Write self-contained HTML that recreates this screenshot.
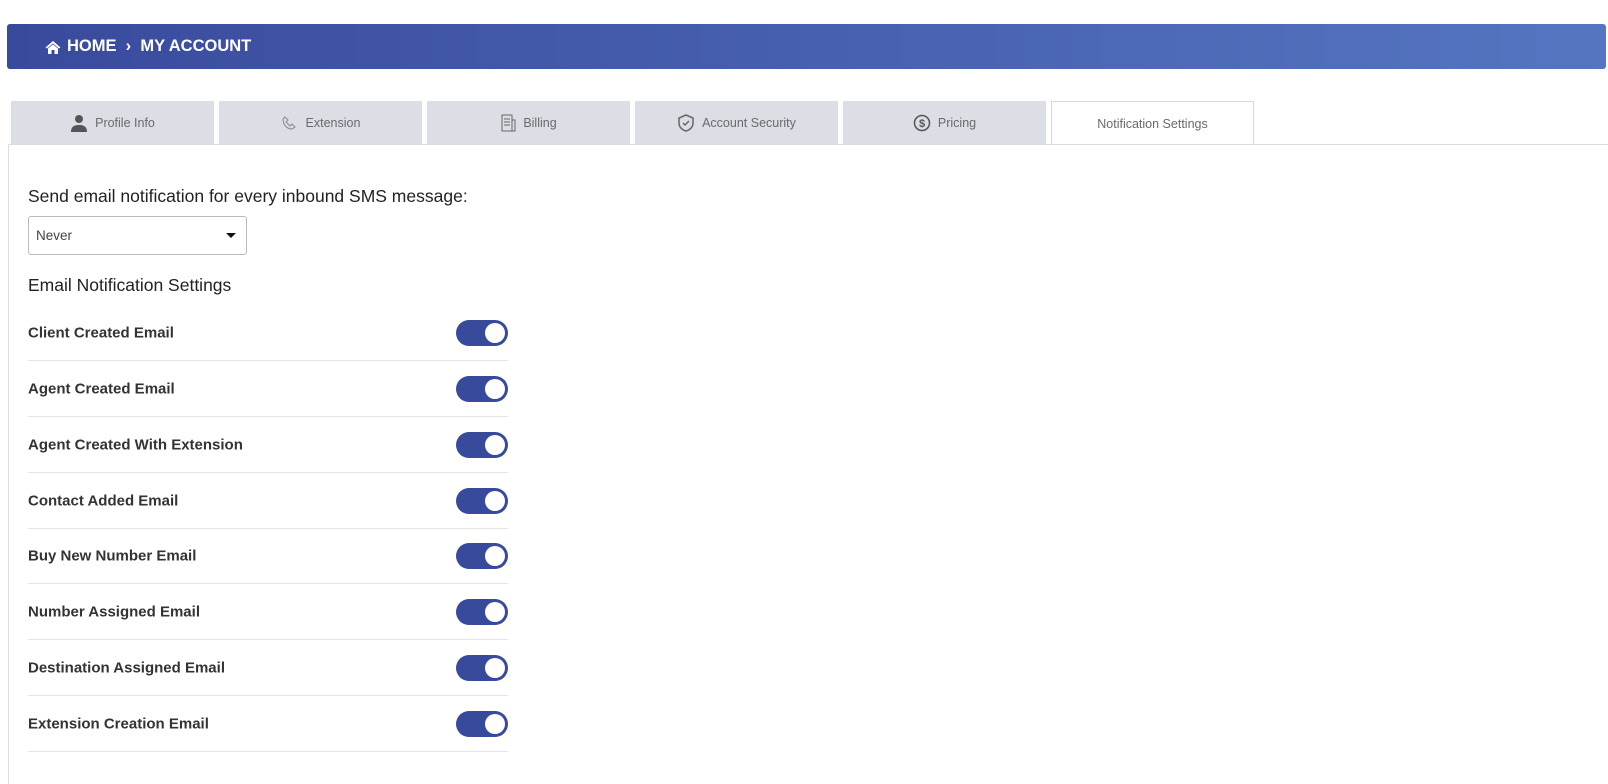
<!DOCTYPE html>
<html><head><meta charset="utf-8"><style>
*{box-sizing:border-box;margin:0;padding:0}
body{width:1608px;height:776px;background:#fff;font-family:"Liberation Sans",sans-serif;position:relative;overflow:hidden;color:#333}
.hdr{position:absolute;left:7px;top:24px;width:1599px;height:45px;border-radius:3px;background:linear-gradient(90deg,#394a9d,#5575c1);color:#fff;font-weight:bold;font-size:16.5px;line-height:45px;padding-left:38px;display:flex;align-items:center;gap:6px}
.tab{position:absolute;top:101px;width:203px;height:43px;background:#dcdee6;color:#6a6a6a;font-size:12.5px;display:flex;align-items:center;justify-content:center;gap:7px}
.tab.act{background:#fff;border:1px solid #d8d8d8;border-bottom:none;height:44px}
.panel{position:absolute;left:8px;top:144px;width:1600px;height:640px;border-left:1px solid #ddd;border-top:1px solid #ddd}
.t1{position:absolute;left:28px;top:186px;font-size:17.5px;color:#222}
.sel{position:absolute;left:28px;top:216px;width:219px;height:39px;border:1px solid #bbb;border-radius:3px;font-size:13.5px;line-height:37px;padding-left:7px;color:#444}
.sel:after{content:"";position:absolute;right:10px;top:16px;border:5px solid transparent;border-top:5px solid #111}
.t2{position:absolute;left:28px;top:275px;font-size:17.5px;color:#222}
.row{position:absolute;left:28px;width:480px;height:56px;border-bottom:1px solid #e5e5e5;font-size:15px;font-weight:bold;color:#333}
.row span{position:absolute;left:0;top:50%;transform:translateY(-50%)}
.tg{position:absolute;right:0;top:50%;transform:translateY(-50%);width:52px;height:26px;border-radius:13px;background:#384a9c}
.tg:after{content:"";position:absolute;right:3px;top:3px;width:20px;height:20px;border-radius:50%;background:#fff}
</style></head><body>
<div class="hdr"><svg width="16" height="14" viewBox="0 0 16 14"><path d="M8 1L0.5 7.5 2 8.5 8 3.5 14 8.5 15.5 7.5z M3 8.5V14h3.5v-4h3v4H13V8.5L8 4.5z" fill="#fff"/></svg>HOME &nbsp;›&nbsp; MY ACCOUNT</div>
<div class="tab" style="left:11px"><svg width="18" height="18" viewBox="0 0 18 18"><circle cx="9" cy="5" r="4" fill="#555"/><path d="M1 18c0-6 4-7 8-7s8 1 8 7z" fill="#555"/></svg>Profile Info</div>
<div class="tab" style="left:219px"><svg width="18" height="18" viewBox="0 0 18 18" fill="none" stroke="#888"><path d="M4 3l3 3-2 2 4 4 2-2 3 3-3 2C6 15 2 11 2 5z"/></svg>Extension</div>
<div class="tab" style="left:427px"><svg width="16" height="18" viewBox="0 0 16 18" fill="none" stroke="#666"><rect x="2" y="1" width="10" height="16"/><path d="M4 5h6M4 8h6M4 11h6M12 6h3v11h-3"/></svg>Billing</div>
<div class="tab" style="left:635px"><svg width="18" height="18" viewBox="0 0 18 18" fill="none" stroke="#666" stroke-width="1.5"><path d="M9 1l7 3v5c0 4-3 7-7 8-4-1-7-4-7-8V4z"/><path d="M6 9l2 2 4-4"/></svg>Account Security</div>
<div class="tab" style="left:843px"><svg width="18" height="18" viewBox="0 0 18 18"><circle cx="9" cy="9" r="7.5" fill="none" stroke="#555" stroke-width="1.5"/><text x="9" y="13" font-size="11" font-weight="bold" text-anchor="middle" fill="#555" font-family="Liberation Sans">$</text></svg>Pricing</div>
<div class="tab act" style="left:1051px">Notification Settings</div>
<div class="panel"></div>
<div class="t1">Send email notification for every inbound SMS message:</div>
<div class="sel">Never</div>
<div class="t2">Email Notification Settings</div>
<div class="row" style="top:305px"><span>Client Created Email</span><div class="tg"></div></div>
<div class="row" style="top:361px"><span>Agent Created Email</span><div class="tg"></div></div>
<div class="row" style="top:417px"><span>Agent Created With Extension</span><div class="tg"></div></div>
<div class="row" style="top:473px"><span>Contact Added Email</span><div class="tg"></div></div>
<div class="row" style="top:528px"><span>Buy New Number Email</span><div class="tg"></div></div>
<div class="row" style="top:584px"><span>Number Assigned Email</span><div class="tg"></div></div>
<div class="row" style="top:640px"><span>Destination Assigned Email</span><div class="tg"></div></div>
<div class="row" style="top:696px"><span>Extension Creation Email</span><div class="tg"></div></div>
</body></html>
